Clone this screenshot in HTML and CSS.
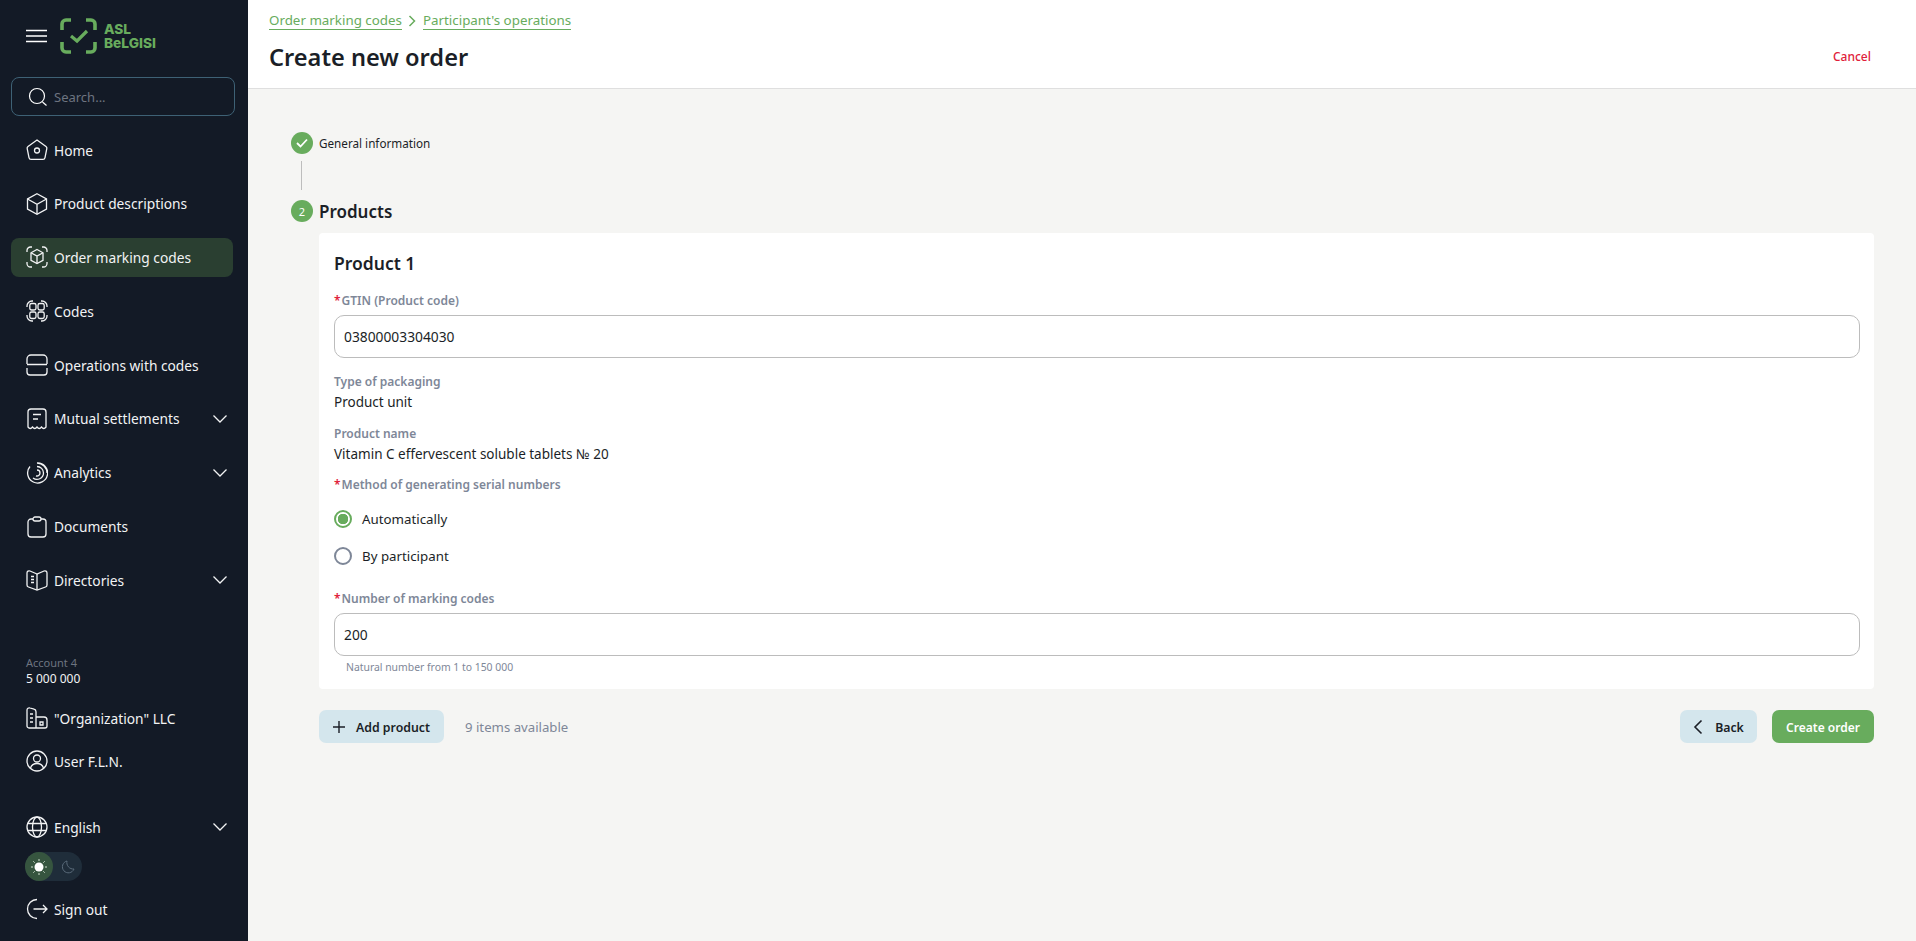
FILE: index.html
```html
<!DOCTYPE html>
<html lang="en">
<head>
<meta charset="utf-8">
<title>Create new order</title>
<link rel="stylesheet" href="styles.css">
</head>
<body>
<div class="app">
  <aside class="sidebar">
    <div class="brand">
      <svg class="burger" viewBox="0 0 21 14" width="21" height="14"><path d="M0 1.5h21M0 7h21M0 12.500h21" stroke="#fff" stroke-width="1.500" fill="none"/></svg>
      <svg class="logo" viewBox="0 0 37 36" width="37" height="36" fill="none" stroke="#68ac5d" stroke-width="3.600"><path d="M11 2H6a4 4 0 0 0-4 4v6M26 2h5a4 4 0 0 1 4 4v6M11 34H6a4 4 0 0 1-4-4v-6M26 34h5a4 4 0 0 0 4-4v-6"/><path d="M11 18l6 5 10-10" stroke-width="3.200"/></svg>
      <div class="logotext"><span>ASL</span><span>BeLGISI</span></div>
    </div>
    <div class="search">
      <svg viewBox="0 0 20 20" width="20" height="20" fill="none" stroke="#fff" stroke-width="1.200"><circle cx="9" cy="9" r="7.500"/><path d="M14.500 15l4 3.500"/></svg>
      <span>Search...</span>
    </div>
    <nav class="nav">
      <a class="item"><svg class="ic" viewBox="0 0 22 22"><path d="M11 1l9 6.500c.7.500 1 1.300.8 2.100l-1.800 9c-.2 1-1 1.700-2 1.700H5c-1 0-1.800-.7-2-1.700l-1.800-9c-.2-.8.1-1.600.8-2.100z"/><circle cx="11" cy="11.500" r="2.500"/></svg><span>Home</span></a>
      <a class="item"><svg class="ic" viewBox="0 0 22 22"><path d="M11 .800l9.500 5.200v10L11 21.200 1.500 16V6z"/><path d="M1.500 6L11 11.200 20.500 6M11 11.200v10"/></svg><span>Product descriptions</span></a>
      <a class="item active"><svg class="ic" viewBox="0 0 22 22"><path d="M6 1H4.500A3.500 3.500 0 0 0 1 4.500V6M16 1h1.500A3.500 3.500 0 0 1 21 4.500V6M6 21H4.500A3.500 3.500 0 0 1 1 17.500V16M16 21h1.500a3.500 3.500 0 0 0 3.500-3.500V16"/><path d="M11 3.500l6 3.300v7.500L11 17.600l-6-3.300V6.800z"/><path d="M5 6.800l6 3.300 6-3.300M11 10.100v7.500"/></svg><span>Order marking codes</span></a>
      <a class="item"><svg class="ic" viewBox="0 0 22 22"><rect x="3.800" y="3.500" width="6.200" height="6.500" rx="1.800"/><rect x="12" y="3.500" width="6.200" height="6.500" rx="1.800"/><rect x="3.800" y="12" width="6.200" height="6.500" rx="1.800"/><rect x="12" y="12" width="6.200" height="6.500" rx="1.800"/><path d="M1 7V6a5 5 0 0 1 5-5h1M15 1h1a5 5 0 0 1 5 5v1M1 15v1a5 5 0 0 0 5 5h1M15 21h1a5 5 0 0 0 5-5v-1"/></svg><span>Codes</span></a>
      <a class="item"><svg class="ic" viewBox="0 0 22 22"><path d="M1 10V5a4 4 0 0 1 4-4h12a4 4 0 0 1 4 4v5M1 10.500h20M1 14v4a3 3 0 0 0 3 3h14a3 3 0 0 0 3-3v-4"/></svg><span>Operations with codes</span></a>
      <a class="item"><svg class="ic" viewBox="0 0 22 22"><path d="M2 19V4a3 3 0 0 1 3-3h12a3 3 0 0 1 3 3v15c-1.500 2-3 2-4.500 0-1.500 2-3 2-4.500 0-1.500 2-3 2-4.500 0C5 21 3.500 21 2 19z"/><path d="M7 6.500h8M7 11h5"/></svg><span>Mutual settlements</span><svg class="chev" viewBox="0 0 14 8"><path d="M.5.500L7 7l6.500-6.500"/></svg></a>
      <a class="item"><svg class="ic" viewBox="0 0 22 22"><path d="M4 4.500A10 10 0 1 0 11 1c5.500 0 10 4.500 10 10"/><path d="M11 4.500a6.500 6.500 0 0 1 6.500 6.500A6.500 6.500 0 0 1 7 16"/><path d="M11 8a3 3 0 0 1 3 3 3 3 0 0 1-4 2.800"/></svg><span>Analytics</span><svg class="chev" viewBox="0 0 14 8"><path d="M.5.500L7 7l6.500-6.500"/></svg></a>
      <a class="item"><svg class="ic" viewBox="0 0 22 22"><path d="M7 3H5a3 3 0 0 0-3 3v12a3 3 0 0 0 3 3h12a3 3 0 0 0 3-3V6a3 3 0 0 0-3-3h-2"/><rect x="7" y="1" width="8" height="4" rx="2"/></svg><span>Documents</span></a>
      <a class="item"><svg class="ic" viewBox="0 0 22 22"><path d="M11 5L4 2c-1.500-.5-3 .3-3 2v12c0 1 .5 1.700 1.500 2l8.500 3 8.500-3c1-.3 1.500-1 1.500-2V4c0-1.700-1.500-2.500-3-2z"/><path d="M11 5v16M5 7.500h3M5 10.500h3M5 13.500h3"/></svg><span>Directories</span><svg class="chev" viewBox="0 0 14 8"><path d="M.5.500L7 7l6.500-6.500"/></svg></a>
    </nav>
    <div class="account">
      <div class="acc-label">Account 4</div>
      <div class="acc-value">5 000 000</div>
    </div>
    <a class="item org"><svg class="ic" viewBox="0 0 22 22"><path d="M10 21H3a2 2 0 0 1-2-2V3c0-1.500 1.500-2.500 3-2l4 1.200c1.200.3 2 1.300 2 2.500V21zM10 10h8a3 3 0 0 1 3 3v6a2 2 0 0 1-2 2h-9"/><path d="M4 7h3M4 11h3M4 15h3M14 15h3v3h-3z"/></svg><span>"Organization" LLC</span></a>
    <a class="item user"><svg class="ic" viewBox="0 0 22 22"><circle cx="11" cy="11" r="10"/><circle cx="11" cy="8.500" r="3.500"/><path d="M4.500 18c1-3 3.500-4.500 6.500-4.500s5.500 1.500 6.500 4.500"/></svg><span>User F.L.N.</span></a>
    <a class="item lang"><svg class="ic" viewBox="0 0 22 22"><circle cx="11" cy="11" r="10"/><ellipse cx="11" cy="11" rx="4.500" ry="10"/><path d="M1.800 7.500h18.400M1.800 14.500h18.400"/></svg><span>English</span><svg class="chev" viewBox="0 0 14 8"><path d="M.5.500L7 7l6.500-6.500"/></svg></a>
    <div class="theme">
      <div class="sun"><svg viewBox="0 0 16 16" width="16" height="16"><circle cx="8" cy="8" r="4.500" fill="#fff"/><path d="M8 0v2M8 14v2M0 8h2M14 8h2M2.300 2.300l1.400 1.400M12.300 12.300l1.400 1.400M2.300 13.700l1.400-1.400M12.300 3.700l1.400-1.400" stroke="#cfe0cf" stroke-width="1"/></svg></div>
      <div class="moon"><svg viewBox="0 0 14 14" width="14" height="14"><path d="M6 1a6 6 0 1 0 7 8A6.500 6.500 0 0 1 6 1z" fill="none" stroke="#5a6b7a" stroke-width="1"/></svg></div>
    </div>
    <a class="item signout"><svg class="ic" viewBox="0 0 22 22"><path d="M11 1.500A9.500 9.500 0 1 0 11 20.500"/><path d="M7.500 11H21M17 7l4 4-4 4"/></svg><span>Sign out</span></a>
  </aside>
  <main class="main">
    <header class="topbar">
      <div>
        <div class="crumbs">
          <a>Order marking codes</a>
          <svg viewBox="0 0 8 12" width="8" height="12"><path d="M1.500 1l5 5-5 5" fill="none" stroke="#68ac5d" stroke-width="1.500"/></svg>
          <a>Participant's operations</a>
        </div>
        <h1>Create new order</h1>
      </div>
      <a class="cancel">Cancel</a>
    </header>
    <section class="content">
      <div class="step done">
        <span class="dot"><svg viewBox="0 0 12 10" width="12" height="10"><path d="M1 5l3.500 3.500L11 1.500" fill="none" stroke="#fff" stroke-width="1.800"/></svg></span>
        <span class="step-title">General information</span>
      </div>
      <div class="connector"></div>
      <div class="step current">
        <span class="dot">2</span>
        <span class="step-title">Products</span>
      </div>
      <div class="body">
        <div class="card">
          <h2>Product 1</h2>
          <label class="lbl first"><i>*</i>GTIN (Product code)</label>
          <div class="input">03800003304030</div>
          <div class="lbl plain l-pack">Type of packaging</div>
          <div class="val">Product unit</div>
          <div class="lbl plain l-name">Product name</div>
          <div class="val">Vitamin C effervescent soluble tablets № 20</div>
          <label class="lbl l-method"><i>*</i>Method of generating serial numbers</label>
          <div class="radio on r-first"><span class="mark"></span>Automatically</div>
          <div class="radio"><span class="mark"></span>By participant</div>
          <label class="lbl l-num"><i>*</i>Number of marking codes</label>
          <div class="input">200</div>
          <div class="hint">Natural number from 1 to 150 000</div>
        </div>
        <div class="actions">
          <button class="btn soft add"><svg viewBox="0 0 12 12" width="12" height="12"><path d="M6 0v12M0 6h12" stroke="#1b1f27" stroke-width="1.400"/></svg>Add product</button>
          <span class="avail">9 items available</span>
          <button class="btn soft back"><svg viewBox="0 0 10 16" width="10" height="16"><path d="M8.500 1.500L2 8l6.500 6.500" fill="none" stroke="#1b1f27" stroke-width="1.600"/></svg>Back</button>
          <button class="btn primary">Create order</button>
        </div>
      </div>
    </section>
  </main>
</div>
</body>
</html>
```
FILE: styles.css
```css
* { box-sizing: border-box; }
html, body { margin: 0; height: 100%; }
body { font-family: "Noto Sans", sans-serif; font-size: 14px; color: #1b1f27; background: #f5f5f3; overflow: hidden; }
.app { display: flex; height: 941px; }

.sidebar { width: 248px; flex: none; background: #131a26; color: #fff; padding: 18px 11px 0; display: flex; flex-direction: column; }
.brand { display: flex; align-items: center; height: 36px; padding-left: 15px; }
.burger { margin-right: 13px; }
.logotext { display: flex; flex-direction: column; margin-left: 7px; color: #68ac5d; font-family: "Inter", sans-serif; font-weight: 800; font-size: 13.700px; line-height: 14px; }
.search { margin-top: 23px; height: 39px; width: 224px; border: 1px solid #3e6175; border-radius: 8px; display: flex; align-items: center; padding-left: 16px; gap: 6px; color: #6d7480; font-size: 13px; }
.nav { display: flex; flex-direction: column; gap: 14.800px; margin-top: 14px; }
.item { display: flex; align-items: center; height: 39px; padding: 1px 0 0 15px; gap: 6px; color: #f2f3f4; font-size: 13.750px; flex: none; }
.item.active { background: #2a3f31; border-radius: 8px; width: 222px; padding-top: 0; }
.ic { width: 22px; height: 22px; flex: none; fill: none; stroke: #f2f3f4; stroke-width: 1.300; }
.chev { width: 14px; height: 8px; margin-left: auto; margin-right: 10px; fill: none; stroke: #f2f3f4; stroke-width: 1.300; flex: none; }
.account { margin-top: 56px; padding-left: 15px; }
.acc-label { color: #6d7480; font-size: 11px; line-height: 15px; }
.acc-value { font-size: 12px; line-height: 17px; color: #f2f3f4; }
.org { margin-top: 11px; width: 222px; }
.user { margin-top: 4px; width: 222px; }
.lang { margin-top: 27px; width: 222px; }
.lang .chev { margin-right: 6px; }
.theme { margin: 6px 0 0 14px; width: 57px; height: 29px; border-radius: 15px; background: #1f2d3a; display: flex; align-items: center; flex: none; }
.sun { width: 28px; height: 29px; border-radius: 50%; background: #36553f; display: flex; align-items: center; justify-content: center; }
.moon { width: 28px; display: flex; justify-content: center; margin-left: 1px; }
.signout { margin-top: 8px; width: 222px; }

.main { flex: 1; min-width: 0; display: flex; flex-direction: column; }
.topbar { height: 89px; flex: none; background: #fff; border-bottom: 1px solid #dfdfdf; display: flex; justify-content: space-between; align-items: flex-start; padding: 11px 45px 0 21px; }
.crumbs { display: flex; align-items: center; gap: 7px; height: 19px; color: #68ac5d; font-size: 13.350px; line-height: 18px; }
.crumbs svg { margin-left: -1px; }
.crumbs a { border-bottom: 1px solid #68ac5d; height: 19px; }
h1 { margin: 9px 0 0; font-size: 23.600px; font-weight: 600; line-height: 36px; color: #1b1f27; }
.cancel { color: #e0213a; font-size: 12px; font-weight: 500; margin-top: 37px; }

.content { padding: 43px 42px 0 43px; flex: 1; }
.step { display: flex; align-items: center; gap: 6px; height: 22px; }
.dot { width: 22px; height: 22px; border-radius: 50%; background: #68ac5d; color: #fff; font-size: 11px; display: flex; align-items: center; justify-content: center; flex: none; }
.step.done .step-title { font-size: 11.700px; }
.step.current .step-title { font-size: 17px; font-weight: 600; }
.connector { width: 1px; height: 29px; background: #bdbdbd; margin: 7px 0 10px 10px; }
.body { margin: 11px 0 0 28px; }
.card { background: #fff; border-radius: 4px; padding: 17px 14px 0 15px; height: 456px; }
h2 { margin: 0; font-size: 17.500px; font-weight: 600; line-height: 26px; }
.lbl { display: block; color: #7e8798; font-size: 12px; font-weight: 600; line-height: 17px; }
.lbl i { color: #e0213a; font-style: normal; margin-right: 1px; }
.first { margin-top: 16px; }
.input { height: 43px; margin-top: 6px; border: 1px solid #bcbcbc; border-radius: 10px; padding: 0 9px; display: flex; align-items: center; font-size: 13.800px; background: #fff; }
.l-pack { margin-top: 15px; }
.l-name { margin-top: 13px; }
.val { font-size: 13.500px; line-height: 20px; margin-top: 2px; }
.l-method { margin-top: 12px; }
.radio { display: flex; align-items: center; gap: 10px; height: 20px; font-size: 13.300px; margin-top: 17px; }
.r-first { margin-top: 16px; }
.mark { width: 18px; height: 18px; border-radius: 50%; border: 2px solid #7e8798; flex: none; background: #fff; }
.radio.on .mark { border-color: #68ac5d; background: radial-gradient(circle, #68ac5d 0 5px, #fff 5.500px); }
.l-num { margin-top: 24px; }
.hint { color: #7e8798; font-size: 10.400px; line-height: 14px; margin: 4px 0 0 12px; }
.actions { display: flex; align-items: center; margin-top: 21px; }
.btn { height: 33px; border: 0; border-radius: 7px; font-family: inherit; font-size: 12.300px; font-weight: 600; display: flex; align-items: center; justify-content: center; padding: 1px 0 0; }
.soft { background: #d4e6ed; color: #1b1f27; }
.add { width: 125px; gap: 11px; justify-content: flex-start; padding-left: 14px; }
.avail { margin-left: 21px; color: #7e8798; font-size: 13.200px; }
.back { width: 77px; gap: 12px; margin-left: auto; }
.primary { width: 102px; margin-left: 15px; background: #68ac5d; color: #fff; font-size: 12px; }
```
